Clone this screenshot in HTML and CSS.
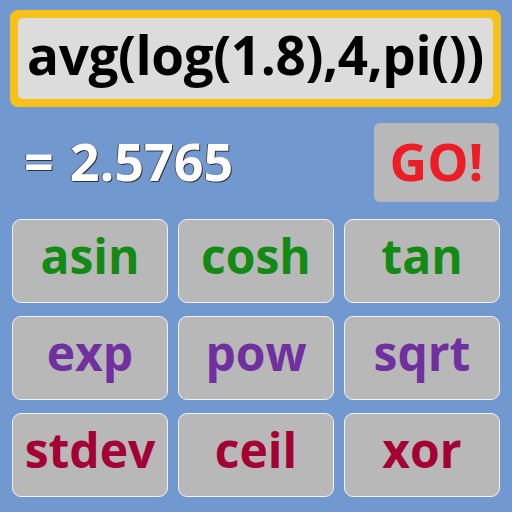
FILE: index.html
```html
<!DOCTYPE html>
<html>
<head>
<meta charset="utf-8">
<link rel="stylesheet" href="styles.css">
</head>
<body>
<div class="app">
  <div class="expr"><div class="expr-inner">avg(log(1.8),4,pi())</div></div>
  <div class="result-row">
    <div class="result"><span class="eq">=</span>2.5765</div>
    <div class="go">GO!</div>
  </div>
  <div class="grid">
    <div class="btn green">asin</div>
    <div class="btn green">cosh</div>
    <div class="btn green">tan</div>
    <div class="btn purple">exp</div>
    <div class="btn purple">pow</div>
    <div class="btn purple">sqrt</div>
    <div class="btn crimson">stdev</div>
    <div class="btn crimson">ceil</div>
    <div class="btn crimson">xor</div>
  </div>
</div>
</body>
</html>
```
FILE: styles.css
```css
html, body {
  margin: 0;
  padding: 0;
  width: 512px;
  height: 512px;
  background: #7199d0;
  overflow: hidden;
}
.app {
  display: flex;
  flex-direction: column;
  font-family: "Open Sans", "DejaVu Sans", sans-serif;
  font-weight: 700;
}
.expr {
  margin: 10px 11px 0 10px;
  height: 97px;
  box-sizing: border-box;
  background: #f6c21a;
  border-radius: 8px;
  padding: 8px;
  display: flex;
}
.expr-inner {
  flex: 1;
  background: #dcdcdc;
  border-radius: 5px;
  display: flex;
  align-items: center;
  justify-content: center;
  font-size: 53px;
  color: #000;
  letter-spacing: -0.4px;
  line-height: 1;
  padding-bottom: 8px;
}
.result-row {
  display: flex;
  justify-content: space-between;
  align-items: center;
  margin: 16px 13px 0 24px;
  height: 79px;
}
.result {
  color: #fff;
  font-size: 52px;
  line-height: 1;
  text-shadow: 1px 1px 0 #333, -1px 0 0 #555;
  padding-bottom: 4px;
}
.eq {
  margin-right: 16px;
}
.go {
  width: 125px;
  height: 79px;
  background: #b8b8b8;
  border-radius: 6px;
  color: #ee1c25;
  font-size: 52px;
  display: flex;
  align-items: center;
  justify-content: center;
  line-height: 1;
  padding-bottom: 4px;
  box-sizing: border-box;
}
.grid {
  display: grid;
  grid-template-columns: repeat(3, 156px);
  grid-auto-rows: 84px;
  column-gap: 10px;
  row-gap: 13px;
  margin: 17px 0 0 12px;
}
.btn {
  background: #b8b8b8;
  border: 1.5px solid #f2f2f2;
  border-radius: 9px;
  box-sizing: border-box;
  display: flex;
  align-items: center;
  justify-content: center;
  font-size: 48px;
  line-height: 1;
  padding-bottom: 10px;
}
.green { color: #138a13; }
.purple { color: #7030a0; }
.crimson { color: #a50034; }
```
